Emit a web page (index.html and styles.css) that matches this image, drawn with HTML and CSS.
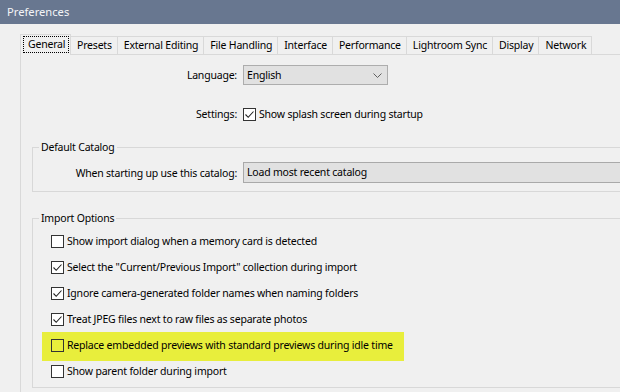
FILE: index.html
```html
<!DOCTYPE html>
<html lang="en">
<head>
<meta charset="utf-8">
<title>Preferences</title>
<link rel="stylesheet" href="styles.css">
</head>
<body>
<div class="window">
  <div class="titlebar">Preferences</div>
  <div class="dialog">
    <div class="tabs">
      <div class="tab selected"><span class="focus">General</span></div>
      <div class="tab">Presets</div>
      <div class="tab">External Editing</div>
      <div class="tab">File Handling</div>
      <div class="tab">Interface</div>
      <div class="tab">Performance</div>
      <div class="tab">Lightroom Sync</div>
      <div class="tab">Display</div>
      <div class="tab">Network</div>
    </div>
    <div class="panel">
      <div class="form-row lang-row">
        <span class="label">Language:</span>
        <div class="select">
          <span>English</span>
          <svg class="chevron" width="9" height="5" viewBox="0 0 9 5"><path d="M0.5 0.5 L4.5 4.5 L8.5 0.5" fill="none" stroke="#606060" stroke-width="1"/></svg>
        </div>
      </div>
      <div class="form-row settings-row">
        <span class="label">Settings:</span>
        <div class="check-item">
          <span class="box checked"><svg width="11" height="11" viewBox="0 0 11 11"><path d="M1.5 5.5 L4.2 8.3 L9.5 2.5" fill="none" stroke="#222" stroke-width="1.1"/></svg></span>
          <span>Show splash screen during startup</span>
        </div>
      </div>

      <fieldset class="group catalog">
        <legend>Default Catalog</legend>
        <div class="form-row catalog-row">
          <span class="label">When starting up use this catalog:</span>
          <div class="combo">Load most recent catalog</div>
        </div>
      </fieldset>

      <fieldset class="group import">
        <legend>Import Options</legend>
        <div class="check-list">
          <div class="check-item row">
            <span class="box"></span>
            <span>Show import dialog when a memory card is detected</span>
          </div>
          <div class="check-item row">
            <span class="box checked"><svg width="11" height="11" viewBox="0 0 11 11"><path d="M1.5 5.5 L4.2 8.3 L9.5 2.5" fill="none" stroke="#222" stroke-width="1.1"/></svg></span>
            <span>Select the "Current/Previous Import" collection during import</span>
          </div>
          <div class="check-item row">
            <span class="box checked"><svg width="11" height="11" viewBox="0 0 11 11"><path d="M1.5 5.5 L4.2 8.3 L9.5 2.5" fill="none" stroke="#222" stroke-width="1.1"/></svg></span>
            <span>Ignore camera-generated folder names when naming folders</span>
          </div>
          <div class="check-item row">
            <span class="box checked"><svg width="11" height="11" viewBox="0 0 11 11"><path d="M1.5 5.5 L4.2 8.3 L9.5 2.5" fill="none" stroke="#222" stroke-width="1.1"/></svg></span>
            <span>Treat JPEG files next to raw files as separate photos</span>
          </div>
          <div class="check-item row highlight">
            <span class="box clear"></span>
            <span>Replace embedded previews with standard previews during idle time</span>
          </div>
          <div class="check-item row">
            <span class="box"></span>
            <span>Show parent folder during import</span>
          </div>
        </div>
      </fieldset>
    </div>
  </div>
</div>
</body>
</html>
```
FILE: styles.css
```css
* { box-sizing: border-box; }

html, body {
  margin: 0;
  padding: 0;
  width: 620px;
  height: 392px;
  overflow: hidden;
  background: #f0f0f0;
}

body {
  font-family: "Noto Sans", "Open Sans", sans-serif;
  font-size: 10.5px;
  letter-spacing: -0.2px;
  color: #000;
}

.window {
  display: flex;
  flex-direction: column;
  width: 620px;
  height: 392px;
  overflow: hidden;
}

.titlebar {
  height: 24px;
  flex: none;
  background: #687790;
  color: #f4f5f7;
  font-size: 11.2px;
  letter-spacing: 0;
  line-height: 24px;
  padding-left: 7px;
}

.dialog {
  padding: 10px 0 0 20px;
  flex: 1;
  display: flex;
  flex-direction: column;
  overflow: hidden;
}

/* Tabs */
.tabs {
  display: flex;
  align-items: flex-end;
  height: 21px;
  margin-bottom: -1px;
  position: relative;
  z-index: 1;
}

.tab {
  height: 18px;
  margin-bottom: 1px;
  padding: 0 5px 0 6px;
  border: 1px solid #d9d9d9;
  border-bottom: none;
  margin-left: -1px;
  line-height: 17px;
  white-space: nowrap;
  background: #f0f0f0;
}

.tab.selected {
  height: 21px;
  margin-bottom: 0;
  margin-left: 0;
  padding: 1px 1px 0 2px;
  width: 51px;
  line-height: 15px;
}

.tab.selected + .tab { margin-left: 0; border-left: none; }

.focus {
  display: block;
  border: 1px dotted #000;
  padding: 0 3px 0 4px;
  height: 17px;
  line-height: 15px;
}

/* Panel */
.panel {
  flex: 1;
  border-top: 1px solid #d9d9d9;
  border-left: 1px solid #d9d9d9;
  display: flex;
  flex-direction: column;
  overflow: hidden;
}

.form-row {
  display: grid;
  grid-template-columns: 216px auto;
  column-gap: 6px;
  align-items: center;
}

.label { text-align: right; white-space: nowrap; }

.lang-row { margin-top: 10px; }

.select {
  width: 145px;
  height: 20px;
  background: #e1e1e1;
  border: 1px solid #adadad;
  display: flex;
  align-items: center;
  justify-content: space-between;
  padding: 0 4px 0 3px;
}

.chevron { display: block; margin-right: 1px; }

.settings-row { margin-top: 21px; height: 16px; }

.check-item {
  display: flex;
  align-items: center;
  gap: 3px;
  white-space: nowrap;
}

.box {
  width: 13px;
  height: 13px;
  flex: none;
  border: 1px solid #333;
  background: #fff;
  display: flex;
  align-items: center;
  justify-content: center;
}

.box svg { display: block; }
.box.clear { background: transparent; }

/* Group boxes */
.group {
  margin: 0 -12px 0 11px;
  padding: 0;
  border: 1px solid #d8d8d8;
  min-width: 0;
}

.group legend {
  margin-left: 6px;
  padding: 0 2px;
  line-height: 14px;
}

.catalog { margin-top: 18px; padding-bottom: 8px; }

.catalog-row {
  grid-template-columns: 204px 1fr;
  margin-top: 8px;
}

.combo {
  height: 21px;
  margin-right: -20px;
  background: #e1e1e1;
  border: 1px solid #a9a9a9;
  padding-left: 3px;
  line-height: 19px;
  white-space: nowrap;
}

.import { margin-top: 19px; padding-bottom: 3px; }

.check-list {
  display: flex;
  flex-direction: column;
  margin-top: 3px;
}

.row {
  height: 26px;
  margin-left: 18px;
}

.row.highlight {
  margin-left: 9px;
  padding-left: 9px;
  width: 362px;
  height: 29px;
  padding-bottom: 3px;
  margin-bottom: -3px;
  background: #e8ee3c;
}
```
